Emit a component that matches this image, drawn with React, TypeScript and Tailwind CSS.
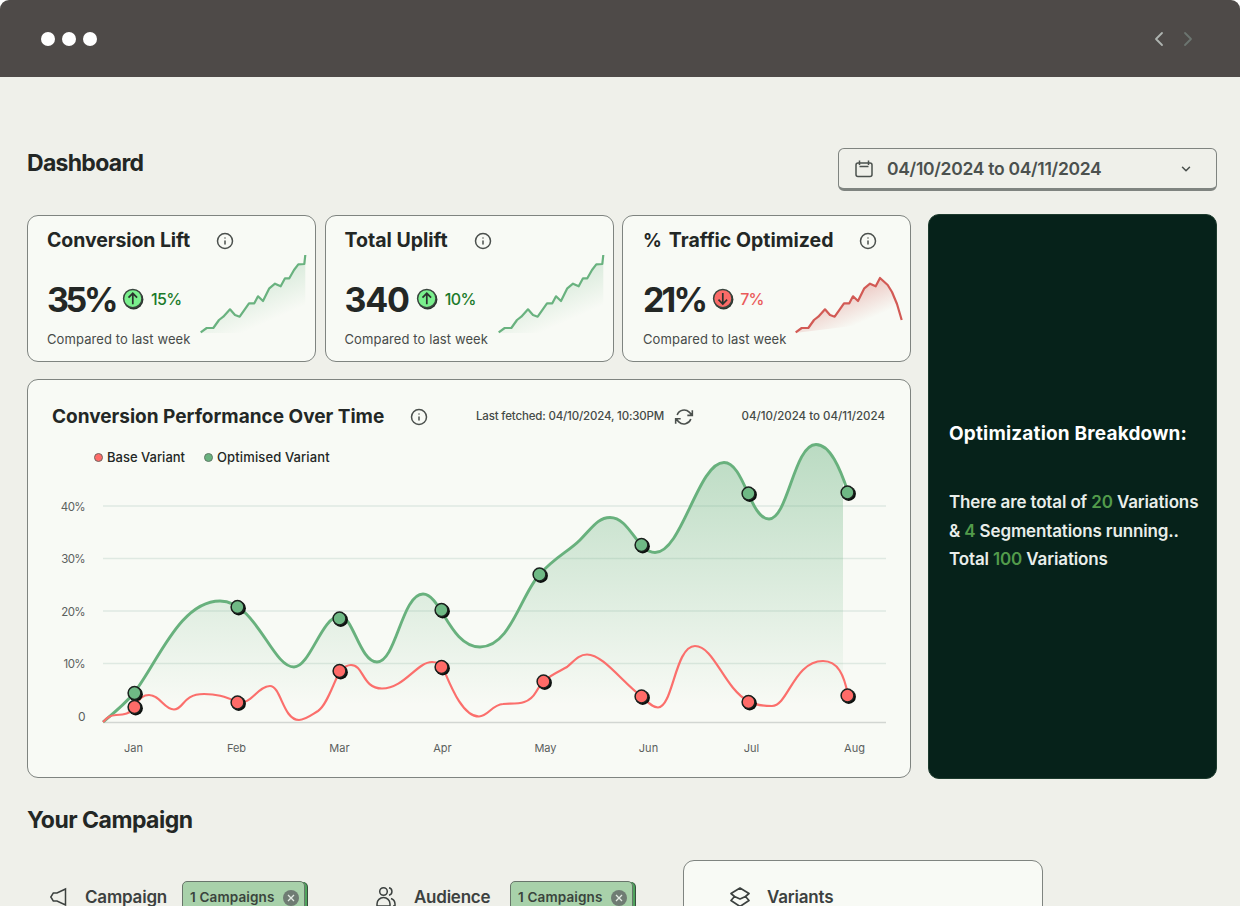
import { ChevronDown, ChevronLeft, ChevronRight, Info } from "lucide-react"

type Point = [number, number]

const sparkBase: Point[] = [
  [200.7, 332.3], [206.7, 328], [213.3, 328], [219, 320], [223.3, 316.7], [230, 309.3], [235, 315],
  [239.7, 316.7], [249, 303.3], [254.3, 303.3], [258, 296.3], [263, 301], [269.3, 288.3], [275, 283.7], [280.7, 286.3],
]
const sparkUp: Point[] = [...sparkBase, [285, 278.3], [289.3, 278.3], [294, 270], [298.3, 264.3], [304.3, 264], [305.3, 255]]
const sparkDown: Point[] = [...sparkBase, [285, 278], [292.7, 285], [297, 292], [302, 304], [306.7, 320]]

const optimisedCurve =
  "M103 722C115 712 125 704 134 693C158 662 180 601 220 601C256 601 272 667 294 667C310 667 322 616 340 616" +
  "C353 616 360 662 377 662C396 662 402 594 423 594C441 594 450 647 480 647C510 647 520 597 539 575" +
  "C556 556 568 552 580 540C592 528 598 517.5 610 517.5C630 517.5 637 552.5 655 552.5C682 552.5 698 462.5 724 462.5" +
  "C744 462.5 750 519 769 519C788 519 794 444.5 816 444.5C830 444.5 840 468 848 492"
const baseCurve =
  "M103 722C108 717 110 715.5 116 715C124 714.5 130 714 135 707C140 697 144 695 149 695C160 695 164 709.5 174 709.5" +
  "C184 709.5 182 694 204 694C216 694 224 696 238 702C250 706 258 686 270 686C281 686 283 720 299 720" +
  "C305 720 310 716 318 711C327 705 333 684 340 671C344 667 347 665 351 665C364 665 362 688.5 382 688.5" +
  "C404 688.5 417 662 432 662C438 662 440 664 443 668C450 684 462 716.5 479 716.5C488 716.5 492 704.5 503 704" +
  "C515 703 528 706 536 692C539 687 541 684 544 681C552 674 560 671 567 667C574 661 579 654.5 587 654.5" +
  "C603 654.5 622 682 641 696C648 702 652 707.5 658 707.5C673 707.5 675 646 695 646C714 646 724 688 748 701" +
  "C756 706 768 706 772 706C788 706 794 661 823 661C838 661 844 675 848 695"

const optimisedDots: Point[] = [[134.5, 693], [237.5, 607], [339.5, 618.5], [441.5, 610], [539.5, 574.5], [641.5, 545], [748.5, 493.5], [847.5, 492.5]]
const baseDots: Point[] = [[134.5, 707], [237.5, 702.5], [339.5, 671], [441.5, 667], [543.5, 681.5], [641.5, 696.5], [748.5, 702], [847.5, 695.5]]

const ticks = [
  { label: "40%", y: 506 },
  { label: "30%", y: 558.5 },
  { label: "20%", y: 611 },
  { label: "10%", y: 663.5 },
]
const months = ["Jan", "Feb", "Mar", "Apr", "May", "Jun", "Jul", "Aug"]

function line(points: Point[]) {
  return "M" + points.map((p) => p.join(" ")).join("L")
}

function Sparkline({ down }: { down?: boolean }) {
  const points = down ? sparkDown : sparkUp
  const id = down ? "spark-down" : "spark-up"
  const color = down ? "#d25a55" : "#69b27f"
  return (
    <svg viewBox="200 253 110 82" className="h-[82px] w-[110px] shrink-0" fill="none">
      <defs>
        <linearGradient id={id} gradientUnits="userSpaceOnUse" x1="250" y1="270" x2="272" y2="320">
          <stop offset="0" stopColor={color} stopOpacity={down ? 0.5 : 0.28} />
          <stop offset="1" stopColor={color} stopOpacity="0" />
        </linearGradient>
      </defs>
      <path d={line(points) + (down ? "L200 333Z" : "V333H200Z")} fill={`url(#${id})`} />
      <path d={line(points)} stroke={color} strokeWidth="2.2" strokeLinejoin="round" />
    </svg>
  )
}

type StatProps = {
  title: React.ReactNode
  value: string
  valueClass: string
  change: string
  down?: boolean
}

function StatCard({ title, value, valueClass, change, down }: StatProps) {
  return (
    <div className={`h-[147px] w-[289px] rounded-[11px] border-[1.5px] border-[#7f8480] bg-[#f8faf5] pt-[13px] ${down ? "pl-[20px]" : "pl-[19px]"}`}>
      <div className="flex h-6 items-center whitespace-nowrap">
        {title}
        <Info className="ml-[26px] h-[18px] w-[18px] text-[#4b504d]" strokeWidth={2} />
      </div>
      <div className="flex justify-between pr-[5px]">
        <div className="pt-[26px]">
          <div className="flex h-10 items-center">
            <span className={valueClass}>{value}</span>
            <svg viewBox="0 0 22 22" className="ml-[7px] h-[22px] w-[22px]" fill="none">
              <circle cx="11.6" cy="11.6" r="9.8" fill="#26302a" />
              <circle cx="10.8" cy="10.6" r="9.2" fill={down ? "#fa6b68" : "#7af08d"} stroke="#3a453e" strokeWidth="1.5" />
              <path
                d={down ? "M10.8 5v11M6.5 11.7l4.3 4.3 4.3-4.3" : "M10.8 16.2V5.5M6.5 9.6l4.3-4.3 4.3 4.3"}
                stroke="#2b332e"
                strokeWidth="1.7"
              />
            </svg>
            <span className={down ? "ml-[6px] text-[16px] font-medium tracking-[-0.8px] text-[#ea5a5a]" : "ml-[7px] text-[16px] font-medium tracking-[-0.6px] text-[#1c7a2b]"}>
              {change}
            </span>
          </div>
          <p className="mt-[10px] h-5 text-[13px] leading-5 tracking-[0.1px] whitespace-nowrap text-[#474b49]">Compared to last week</p>
        </div>
        <Sparkline down={down} />
      </div>
    </div>
  )
}

function Dots({ points, fill }: { points: Point[]; fill: string }) {
  return (
    <>
      {points.map(([x, y]) => (
        <g key={x}>
          <circle cx={x + 1.2} cy={y + 1.2} r="7.2" fill="#0b0f0d" />
          <circle cx={x} cy={y} r="6.4" fill={fill} stroke="#1b211e" strokeWidth="1.5" />
        </g>
      ))}
    </>
  )
}

function PerformanceChart() {
  return (
    <svg viewBox="28 436 881 340" className="col-start-1 row-start-1 h-[340px] w-[881px]" fill="none">
      <defs>
        <linearGradient id="area" gradientUnits="userSpaceOnUse" x1="0" y1="445" x2="0" y2="705">
          <stop offset="0" stopColor="#69b27f" stopOpacity="0.43" />
          <stop offset="1" stopColor="#69b27f" stopOpacity="0" />
        </linearGradient>
      </defs>
      {ticks.map(({ label, y }) => (
        <g key={label}>
          <path d={`M103 ${y}H886`} stroke="#dfe9e2" strokeWidth="1.4" />
          <text x="85" y={y + 4.5} textAnchor="end" fontSize="11.5" letterSpacing="-0.6" fill="#5b605d">{label}</text>
        </g>
      ))}
      <text x="85.5" y="721" textAnchor="end" fontSize="12" fill="#5b605d">0</text>
      <clipPath id="plot">
        <rect x="103" y="436" width="740" height="286" />
      </clipPath>
      <path d={`${optimisedCurve}V722H103Z`} fill="url(#area)" clipPath="url(#plot)" />
      <path d="M103 722.5H886" stroke="#d2d6d2" strokeWidth="1.5" />
      <path d={optimisedCurve} stroke="#68b17d" strokeWidth="2.9" />
      <path d={baseCurve} stroke="#fb6f6c" strokeWidth="2.2" />
      <Dots points={optimisedDots} fill="#6fb985" />
      <Dots points={baseDots} fill="#ff6b68" />
      {months.map((month, i) => (
        <text key={month} x={133.5 + i * 103} y="751.5" textAnchor="middle" fontSize="11" fill="#5b605d">{month}</text>
      ))}
    </svg>
  )
}

function Tag() {
  return (
    <div className="flex h-8 w-[123px] items-center rounded-[5px] border-[1.5px] border-[#68756b] bg-[#a8d1aa] pt-px pl-[7px] shadow-[2px_1px_0_#4fa35d,3px_1px_0_#38503e]">
      <span className="text-[13.5px] font-semibold tracking-[0.15px] whitespace-nowrap text-[#3a443d]">1 Campaigns</span>
      <svg viewBox="0 0 16 16" className="ml-auto mr-[5px] h-4 w-4">
        <circle cx="8" cy="8" r="8" fill="#6f7c73" />
        <path d="M5 5l6 6M11 5l-6 6" stroke="#e4ece4" strokeWidth="1.3" />
      </svg>
    </div>
  )
}

export default function App() {
  return (
    <div className="h-[906px] w-[1240px] overflow-hidden rounded-t-[9px] bg-[#eff0ea] font-['Inter',sans-serif] text-[#232725]">
      <header className="flex h-[77px] items-center justify-between bg-[#4e4a48] pr-[40px] pl-[41px]">
        <div className="flex gap-[7px]">
          <span className="h-[14px] w-[14px] rounded-full bg-white" />
          <span className="h-[14px] w-[14px] rounded-full bg-white" />
          <span className="h-[14px] w-[14px] rounded-full bg-white" />
        </div>
        <div className="flex gap-[5px]">
          <ChevronLeft className="h-6 w-6 text-[#aeb4b0]" strokeWidth={1.8} />
          <ChevronRight className="h-6 w-6 text-[#6c7570]" strokeWidth={1.8} />
        </div>
      </header>

      <main className="pr-[23px] pl-[27px]">
        <div className="flex items-start justify-between pt-[71px]">
          <h1 className="-mt-px text-[23px] leading-8 font-bold tracking-[-0.7px]">Dashboard</h1>
          <div className="flex h-[43px] w-[379px] items-center rounded-[6px] border-[1.5px] border-b-[3px] border-[#7f8480] pt-px pr-[23px] pl-[15px] text-[#4b514e]">
            <svg viewBox="0 0 20 20" className="h-5 w-5" fill="none" stroke="currentColor" strokeWidth="1.5">
              <rect x="2" y="4" width="16" height="13.5" rx="2" />
              <path d="M5.5 1.5V6M14.5 1.5V6M5.5 7.5h9" />
            </svg>
            <span className="ml-[13px] text-[17.5px] font-semibold tracking-[-0.3px] whitespace-nowrap">04/10/2024 to 04/11/2024</span>
            <ChevronDown className="ml-auto h-[14px] w-[14px]" strokeWidth={2.6} />
          </div>
        </div>

        <div className="mt-[23px] flex h-[565px] gap-[17px]">
          <div className="flex w-[884px] flex-col gap-[17px] pt-px">
            <div className="flex justify-between">
              <StatCard
                title={<h2 className="text-[19.5px] font-bold tracking-[-0.1px]">Conversion Lift</h2>}
                value="35%"
                valueClass="text-[34px] font-bold tracking-[-3.4px]"
                change="15%"
              />
              <StatCard
                title={<h2 className="text-[19.5px] font-bold">Total Uplift</h2>}
                value="340"
                valueClass="text-[34px] font-bold tracking-[-1.2px]"
                change="10%"
              />
              <StatCard
                title={
                  <h2 className="flex items-center gap-[7px] text-[19.5px] font-bold">
                    <span className="text-[18.5px]">%</span>
                    <span>Traffic Optimized</span>
                  </h2>
                }
                value="21%"
                valueClass="text-[34px] font-bold tracking-[-2.8px]"
                change="7%"
                down
              />
            </div>

            <section className="h-[399px] rounded-[11px] border-[1.5px] border-[#7f8480] bg-[#f8faf5]">
              <div className="flex h-[56px] items-center pt-[18px] pr-[25px] pl-[24px] whitespace-nowrap">
                <h2 className="w-[358px] text-[19px] font-bold">Conversion Performance Over Time</h2>
                <Info className="h-[18px] w-[18px] text-[#4b504d]" />
                <span className="ml-[48px] text-[11.5px] font-medium tracking-[-0.17px] text-[#454a47]">Last fetched: 04/10/2024, 10:30PM</span>
                <svg viewBox="0 0 24 24" className="ml-[10px] h-[20px] w-[20px] text-[#4b504d]" fill="none" stroke="currentColor" strokeWidth="1.9">
                  <path d="M22 4v6h-6M2 20v-6h6M3.8 9.5a8.8 8.8 0 0 1 14.5-3.3L22 10M2 14l3.7 3.8a8.8 8.8 0 0 0 14.5-3.3" />
                </svg>
                <span className="ml-auto text-[11.5px] font-medium text-[#454a47]">04/10/2024 to 04/11/2024</span>
              </div>
              <div className="grid">
                <PerformanceChart />
                <div className="col-start-1 row-start-1 flex h-[43px] items-center pl-[66px] text-[13px] font-medium whitespace-nowrap">
                  <span className="h-[9px] w-[9px] rounded-full border border-[#71645f] bg-[#ff6b68]" />
                  <span className="ml-1">Base Variant</span>
                  <span className="ml-[19px] h-[9px] w-[9px] rounded-full border border-[#607a67] bg-[#69b27f]" />
                  <span className="ml-1 tracking-[0.12px]">Optimised Variant</span>
                </div>
              </div>
            </section>
          </div>

          <aside className="w-[289px] rounded-[11px] border border-[#1d3b2e] bg-[#06221a] pt-[205px] pl-5 text-white">
            <h2 className="text-[19px] leading-7 font-bold tracking-[0.18px] whitespace-nowrap">Optimization Breakdown:</h2>
            <p className="mt-10 text-[17px] leading-[28.5px] font-semibold tracking-[-0.14px] whitespace-nowrap text-[#e9eeea]">
              There are total of <span className="text-[#529b4b]">20</span> Variations
              <br />& <span className="text-[#529b4b]">4</span> Segmentations running..
              <br />
              Total <span className="text-[#529b4b]">100</span> Variations
            </p>
          </aside>
        </div>

        <h2 className="mt-[25px] text-[23px] leading-8 font-bold tracking-[-0.5px]">Your Campaign</h2>
        <div className="mt-6 flex items-start text-[17px] font-semibold text-[#3c413f]">
          <div className="flex w-[328px] items-center pt-[21px] pl-[22px]">
            <svg viewBox="0 0 20 20" className="h-5 w-5" fill="none" stroke="currentColor" strokeWidth="1.5">
              <path d="M16.500 2v16l-8.500-4H4.300l-2.500-4 2.500-4H8z" />
            </svg>
            <span className="ml-[16px] w-[97px] pt-0.5 tracking-[-0.2px]">Campaign</span>
            <Tag />
          </div>
          <div className="flex w-[328px] items-center pt-[21px] pl-[20px]">
            <svg viewBox="0 0 22 22" className="h-[22px] w-[22px]" fill="none" stroke="currentColor" strokeWidth="1.5">
              <circle cx="8.5" cy="5.5" r="3.8" />
              <path d="M14 1.8a3.8 3.8 0 0 1 0 7.4M2 20v-2a6 6 0 0 1 13 0v2zM16 12.5a6 6 0 0 1 4 5.500v2h-2" />
            </svg>
            <span className="ml-[17px] w-[96px] pt-0.5 tracking-[-0.25px]">Audience</span>
            <Tag />
          </div>
          <div className="flex h-[80px] w-[360px] rounded-[11px] border-[1.5px] border-[#7f8480] bg-[#f8faf5] pt-[25px] pl-[45px]">
            <svg viewBox="0 0 22 22" className="h-[22px] w-[22px]" fill="none" stroke="currentColor" strokeWidth="1.7" strokeLinejoin="round">
              <path d="M11 2l9 5.500-3.500 3L20 14.500l-9 6-9-6 3.500-4L2 7.500zM5.500 10.500L11 13l5.500-2.500" />
            </svg>
            <span className="mt-[3px] ml-[16px] h-[17px] leading-none tracking-[-0.2px]">Variants</span>
          </div>
        </div>
      </main>
    </div>
  )
}
